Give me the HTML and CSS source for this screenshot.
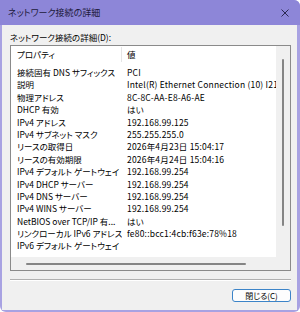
FILE: index.html
```html
<!DOCTYPE html>
<html lang="ja">
<head>
    <meta charset="UTF-8">
    <meta name="viewport" content="width=device-width, initial-scale=1.0">
    <title>ネットワーク接続の詳細</title>
    <link rel="stylesheet" href="styles.css">
</head>
<body>

    <div class="window">
        <div class="titlebar">
            <span class="title">ネットワーク接続の詳細</span>
            <svg class="close-x" width="8" height="8" viewBox="0 0 8 8">
                <path d="M0.5 0.5 L7.5 7.5 M7.5 0.5 L0.5 7.5" stroke="#2a2850" stroke-width="1"/>
            </svg>
        </div>

        <div class="content">
            <div class="label">ネットワーク接続の詳細(D):</div>

            <div class="listbox">
                <div class="list-view">
                    <div class="list-header">
                        <div class="col-prop">プロパティ</div>
                        <div class="col-value">値</div>
                    </div>
                    <div class="rows">
                        <div class="row"><div class="col-prop">接続固有 DNS サフィックス</div><div class="col-value">PCI</div></div>
                        <div class="row"><div class="col-prop">説明</div><div class="col-value">Intel(R) Ethernet Connection (10) I219-V</div></div>
                        <div class="row"><div class="col-prop">物理アドレス</div><div class="col-value">8C-8C-AA-E8-A6-AE</div></div>
                        <div class="row"><div class="col-prop">DHCP 有効</div><div class="col-value">はい</div></div>
                        <div class="row"><div class="col-prop">IPv4 アドレス</div><div class="col-value">192.168.99.125</div></div>
                        <div class="row"><div class="col-prop">IPv4 サブネット マスク</div><div class="col-value">255.255.255.0</div></div>
                        <div class="row"><div class="col-prop">リースの取得日</div><div class="col-value">2026年4月23日 15:04:17</div></div>
                        <div class="row"><div class="col-prop">リースの有効期限</div><div class="col-value">2026年4月24日 15:04:16</div></div>
                        <div class="row"><div class="col-prop">IPv4 デフォルト ゲートウェイ</div><div class="col-value">192.168.99.254</div></div>
                        <div class="row"><div class="col-prop">IPv4 DHCP サーバー</div><div class="col-value">192.168.99.254</div></div>
                        <div class="row"><div class="col-prop">IPv4 DNS サーバー</div><div class="col-value">192.168.99.254</div></div>
                        <div class="row"><div class="col-prop">IPv4 WINS サーバー</div><div class="col-value">192.168.99.254</div></div>
                        <div class="row"><div class="col-prop">NetBIOS over TCP/IP 有...</div><div class="col-value">はい</div></div>
                        <div class="row"><div class="col-prop">リンクローカル IPv6 アドレス</div><div class="col-value">fe80::bcc1:4cb:f63e:78%18</div></div>
                        <div class="row"><div class="col-prop">IPv6 デフォルト ゲートウェイ</div><div class="col-value"></div></div>
                    </div>
                </div>
                <div class="vscroll"><div class="vthumb"></div></div>
                <div class="hscroll"><div class="hthumb"></div></div>
                <div class="corner"></div>
            </div>

            <div class="separator"></div>

            <div class="buttons">
                <button class="close-button">閉じる(C)</button>
            </div>
        </div>
    </div>

</body>
</html>
```

FILE: styles.css
```css
body {
    margin: 0;
    font-family: "Noto Sans CJK JP", "Noto Sans", sans-serif;
    font-feature-settings: "palt";
    color: #000;
}
.window {
    width: 300px;
    height: 312px;
    background-color: #a8a2e2;
    border-radius: 0 6px 6px 6px;
    display: flex;
    flex-direction: column;
    overflow: hidden;
}
.titlebar {
    height: 25px;
    background-color: #8d86d8;
    display: flex;
    align-items: center;
    justify-content: space-between;
    padding: 0 11px 0 8px;
    flex-shrink: 0;
}
.title {
    font-size: 9px;
    color: #1c1a3a;
}
.close-x {
    display: block;
}
.content {
    flex: 1;
    margin: 0 3px 2px 2px;
    background-color: #f0f0f0;
    padding: 0 6px 0 8px;
    display: flex;
    flex-direction: column;
}
.label {
    font-size: 8.5px;
    height: 20px;
    line-height: 12px;
    padding-top: 6px;
    box-sizing: border-box;
}
.listbox {
    height: 224px;
    border: 1px solid #8a8a8a;
    background-color: #fff;
    display: grid;
    grid-template-columns: 1fr 14px;
    grid-template-rows: 1fr 13px;
    overflow: hidden;
}
.list-view {
    overflow: hidden;
    font-size: 8.5px;
}
.list-header {
    display: flex;
    height: 15px;
    line-height: 15px;
    padding-top: 1px;
}
.list-header .col-prop {
    border-right: 1px solid #e5e5e5;
}
.rows {
    padding-top: 4px;
}
.row {
    display: flex;
    height: 12.4px;
    line-height: 12.4px;
}
.col-prop {
    width: 111px;
    padding-left: 6px;
    box-sizing: border-box;
    flex-shrink: 0;
    white-space: nowrap;
    overflow: hidden;
}
.col-value {
    padding-left: 5px;
    white-space: nowrap;
    letter-spacing: 0.2px;
}
.vscroll {
    background-color: #f0f0f0;
    display: flex;
    justify-content: center;
    padding-top: 13px;
}
.vthumb {
    width: 2px;
    height: 167px;
    background-color: #858585;
    border-radius: 1px;
}
.hscroll {
    background-color: #f0f0f0;
    display: flex;
    align-items: center;
    padding-left: 15px;
}
.hthumb {
    width: 220px;
    height: 2px;
    background-color: #858585;
    border-radius: 1px;
}
.corner {
    background-color: #f0f0f0;
}
.separator {
    margin-top: 8px;
    height: 1px;
    background-color: #b0b0b0;
    border-bottom: 1px solid #fff;
}
.buttons {
    display: flex;
    justify-content: flex-end;
    padding-top: 8px;
}
.close-button {
    width: 59px;
    height: 13px;
    padding: 0;
    font-family: "Noto Sans CJK JP", sans-serif;
    font-feature-settings: "palt";
    font-size: 8px;
    line-height: 11px;
    color: #000;
    background-color: #fdfdfd;
    border: 1px solid #3c84c8;
    border-radius: 3px;
}
```
